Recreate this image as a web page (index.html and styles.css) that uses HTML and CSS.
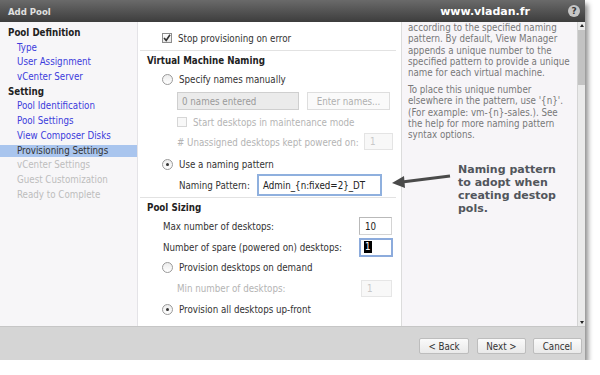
FILE: index.html
```html
<!DOCTYPE html>
<html lang="en">

<head>
    <meta charset="UTF-8">
    <meta name="viewport" content="width=device-width, initial-scale=1.0">
    <title>Add Pool</title>
    <link rel="stylesheet" href="styles.css">
</head>

<body>
    <div class="window">
        <div class="titlebar">
            <span class="title">Add Pool</span>
            <span class="site">www.vladan.fr</span>
            <span class="help-icon">?</span>
        </div>

        <div class="body">
            <!-- wizard steps -->
            <div class="nav">
                <div class="nav-group">Pool Definition</div>
                <div class="nav-item">Type</div>
                <div class="nav-item">User Assignment</div>
                <div class="nav-item">vCenter Server</div>
                <div class="nav-group">Setting</div>
                <div class="nav-item">Pool Identification</div>
                <div class="nav-item">Pool Settings</div>
                <div class="nav-item">View Composer Disks</div>
                <div class="nav-item current">Provisioning Settings</div>
                <div class="nav-item disabled">vCenter Settings</div>
                <div class="nav-item disabled">Guest Customization</div>
                <div class="nav-item disabled">Ready to Complete</div>
            </div>

            <!-- provisioning form -->
            <div class="main">
                <div class="row lvl1 first">
                    <span class="check on">
                        <svg width="8" height="8" viewBox="0 0 8 8"><path d="M1 4 L3.2 6.4 L7 0.8" fill="none" stroke="#333" stroke-width="1.6"/></svg>
                    </span>
                    <span class="label">Stop provisioning on error</span>
                </div>
                <div class="separator"></div>
                <div class="row heading">Virtual Machine Naming</div>
                <div class="row lvl1 m5">
                    <span class="radio"></span>
                    <span class="label">Specify names manually</span>
                </div>
                <div class="row lvl2 tall m6">
                    <span class="field names">0 names entered</span>
                    <span class="btn-disabled">Enter names...</span>
                </div>
                <div class="row lvl2 m5 muted">
                    <span class="check off"></span>
                    <span class="label">Start desktops in maintenance mode</span>
                </div>
                <div class="row lvl2 tall m4 muted spread">
                    <span class="label-plain">#&nbsp;Unassigned desktops kept powered on:</span>
                    <span class="field small unassigned">1</span>
                </div>
                <div class="row lvl1 m6">
                    <span class="radio on"></span>
                    <span class="label">Use a naming pattern</span>
                </div>
                <div class="row lvl2 pattern-row m3">
                    <span class="label-plain pattern-label">Naming Pattern:</span>
                    <span class="field pattern">Admin_{n:fixed=2}_DT</span>
                </div>
                <div class="separator m1"></div>
                <div class="row heading">Pool Sizing</div>
                <div class="row lvl1 tall m3 spread">
                    <span class="label-plain">Max number of desktops:</span>
                    <span class="field small count">10</span>
                </div>
                <div class="row lvl1 tall m3 spread">
                    <span class="label-plain">Number of spare (powered on) desktops:</span>
                    <span class="field small count focus"><span class="selected">1</span></span>
                </div>
                <div class="row lvl1 m4">
                    <span class="radio"></span>
                    <span class="label">Provision desktops on demand</span>
                </div>
                <div class="row lvl2 tall m5 muted spread">
                    <span class="label-plain">Min number of desktops:</span>
                    <span class="field small minimum">1</span>
                </div>
                <div class="row lvl1 m5">
                    <span class="radio on"></span>
                    <span class="label">Provision all desktops up-front</span>
                </div>
            </div>

            <!-- help text -->
            <div class="help">
                <p>according to the specified naming<br>pattern. By default, View Manager<br>appends a unique number to the<br>specified pattern to provide a unique<br>name for each virtual machine.</p>
                <p>To place this unique number<br>elsewhere in the pattern, use '{n}'.<br>(For example: vm-{n}-sales.). See<br>the help for more naming pattern<br>syntax options.</p>
            </div>

            <div class="scrollbar">
                <span class="arrow up"></span>
                <span class="thumb"></span>
                <span class="arrow down"></span>
            </div>
        </div>

        <div class="footer">
            <button class="back">&lt; Back</button>
            <button class="next">Next &gt;</button>
            <button class="cancel">Cancel</button>
        </div>
    </div>

    <!-- annotation over the screenshot -->
    <svg class="callout-arrow" width="64" height="16" viewBox="0 0 64 16">
        <path d="M12 10 L60 4" stroke="#4a4a4a" stroke-width="3" fill="none"/>
        <path d="M2 11 L14 4 L15 16 Z" fill="#4a4a4a"/>
    </svg>
    <div class="callout">Naming pattern<br>to adopt when<br>creating destop<br>pols.</div>
</body>

</html>
```

FILE: styles.css
```css
* {
    box-sizing: border-box;
}

body {
    margin: 0;
    background-color: #fff;
    font-family: "DejaVu Sans Condensed", "DejaVu Sans", sans-serif;
    font-size: 9.7px;
    color: #333;
}

.window {
    width: 585px;
    height: 360px;
    display: flex;
    flex-direction: column;
    background-color: #f7f6f8;
    box-shadow: 3px 4px 5px rgba(0, 0, 0, 0.45);
}

.titlebar {
    height: 22px;
    display: flex;
    align-items: center;
    padding: 0 5px 0 8px;
    background: linear-gradient(#6a6a6a, #3d3d3d);
}

.title {
    font-weight: bold;
    font-size: 9.5px;
    color: #e0e0e0;
}

.site {
    margin-left: auto;
    margin-right: 38px;
    font-family: "DejaVu Sans", sans-serif;
    font-weight: bold;
    font-size: 11px;
    color: #fff;
}

.help-icon {
    width: 12px;
    height: 12px;
    border-radius: 50%;
    background-color: #c6c6c6;
    color: #3a3a3a;
    font-family: "DejaVu Sans", sans-serif;
    font-weight: bold;
    font-size: 9px;
    display: flex;
    align-items: center;
    justify-content: center;
}

.body {
    display: flex;
    height: 304px;
}

/* steps */
.nav {
    width: 138px;
    padding-top: 5px;
    border-right: 1px solid #e4e3e7;
    background-color: #f7f6f8;
}

.nav-group,
.nav-item {
    line-height: 12px;
    margin-bottom: 2.7px;
}

.nav-group {
    padding-left: 8px;
    font-weight: bold;
    color: #222;
}

.nav-item {
    padding-left: 17px;
    color: #3c3cdc;
}

.nav-item.current {
    background-color: #a9c5ee;
    color: #333;
}

.nav-item.disabled {
    color: #bdbdbd;
}

/* form */
.main {
    width: 263px;
    padding: 8px 9px 0 9px;
    background-color: #fff;
}

.row {
    display: flex;
    align-items: center;
    height: 14px;
    white-space: nowrap;
}

.row.first {
    height: 16px;
}

.row.tall {
    height: 18px;
}

.row.spread {
    justify-content: space-between;
}

.lvl1 {
    padding-left: 15px;
}

.lvl2 {
    padding-left: 30px;
}

.m1 { margin-top: 1px; }
.m3 { margin-top: 3px; }
.m4 { margin-top: 4px; }
.m5 { margin-top: 5px; }
.m6 { margin-top: 6px; }

.heading {
    margin-top: 2px;
    font-weight: bold;
    color: #222;
}

.separator {
    height: 1px;
    margin: 4px -4px 0 -7px;
    background-color: #e2e2e2;
}

.separator.m1 {
    margin-top: 1px;
}

.label {
    margin-left: 6px;
}

.lvl1.spread {
    padding-left: 16px;
}

.muted {
    color: #b4b4b4;
}

.check {
    width: 10px;
    height: 10px;
    border: 1px solid #8c8c8c;
    background: linear-gradient(#fff, #e8e8e8);
    display: flex;
    align-items: center;
    justify-content: center;
}

.check.off {
    border-color: #d6d6d6;
    background: #f8f8f8;
}

.radio {
    width: 11px;
    height: 11px;
    border-radius: 50%;
    border: 1px solid #9a9a9a;
    background: linear-gradient(#ececec, #fff);
    display: flex;
    align-items: center;
    justify-content: center;
}

.radio.on::after {
    content: "";
    width: 3px;
    height: 3px;
    border-radius: 50%;
    background-color: #333;
}

.field {
    height: 18px;
    display: flex;
    align-items: center;
    padding-left: 4px;
    border: 1px solid #c4c4c4;
    background-color: #fff;
}

.field.names {
    width: 122px;
    background-color: #ebebeb;
    border-color: #cfcfcf;
    color: #9a9a9a;
}

.btn-disabled {
    width: 83px;
    height: 18px;
    margin-left: 8px;
    display: flex;
    align-items: center;
    justify-content: center;
    border: 1px solid #dedede;
    background-color: #fafafa;
    color: #b0b0b0;
}

.field.small {
    width: 33px;
    padding-left: 5px;
}

.field.unassigned {
    width: 29px;
    height: 17px;
    margin-top: -1px;
    margin-right: -1px;
    border-color: #e4e4e4;
    background-color: #f8f8f8;
    color: #c8c8c8;
}

.field.count {
    border-color: #b9b9b9 #d4d4d4 #d4d4d4 #b9b9b9;
    color: #222;
}

.field.focus {
    width: 34px;
    height: 19px;
    border: 2px solid #8cabdc;
    padding-left: 3px;
    margin-right: -1px;
}

.selected {
    background-color: #000;
    color: #fff;
    line-height: 12px;
    padding: 0 1px;
}

.field.minimum {
    width: 31px;
    height: 17px;
    border-color: #e6e6e6;
    background-color: #f8f8f8;
    color: #c8c8c8;
}

.pattern-row {
    height: 22px;
    padding-left: 32px;
}

.pattern-label {
    width: 78px;
}

.field.pattern {
    width: 125px;
    height: 22px;
    padding-left: 4px;
    border: 2px solid #8fb0de;
    color: #222;
}

/* help panel */
.help {
    width: 176px;
    padding-left: 6px;
    overflow: hidden;
    border-left: 1px solid #dcdcdc;
    background-color: #f7f5f8;
    color: #787878;
    line-height: 11.3px;
    white-space: nowrap;
}

.help p {
    margin: 0 0 5.5px 0;
}

.scrollbar {
    width: 8px;
    display: flex;
    flex-direction: column;
    background-color: #eaeaea;
    border-left: 1px solid #d4d4d4;
}

.scrollbar .arrow {
    height: 7px;
    display: flex;
    align-items: center;
    justify-content: center;
}

.scrollbar .arrow::after {
    content: "";
    border-left: 2px solid transparent;
    border-right: 2px solid transparent;
}

.scrollbar .up::after {
    border-bottom: 3px solid #222;
}

.scrollbar .down::after {
    border-top: 3px solid #222;
}

.scrollbar .thumb {
    height: 55px;
    margin-top: 1px;
    background-color: #c3c3c3;
}

.scrollbar .down {
    margin-top: auto;
}

/* buttons */
.footer {
    height: 34px;
    display: flex;
    justify-content: flex-end;
    gap: 7px;
    padding: 11px 3px 0 0;
    border-top: 1px solid #c6c6c6;
    background-color: #d5d5d5;
}

.footer button {
    width: 49px;
    height: 16px;
    padding: 0;
    border: 1px solid #bdbdbd;
    border-radius: 2px;
    background: linear-gradient(#fafafa, #e9e9e9);
    font-family: "DejaVu Sans Condensed", "DejaVu Sans", sans-serif;
    font-size: 9.7px;
    color: #333;
}

.footer .back {
    width: 50px;
    margin-right: 1px;
}

/* annotation */
.callout {
    position: absolute;
    left: 458px;
    top: 163px;
    font-family: "DejaVu Sans", sans-serif;
    font-weight: bold;
    font-size: 11px;
    line-height: 13px;
    color: #52565c;
}

.callout-arrow {
    position: absolute;
    left: 390px;
    top: 172px;
}
```
